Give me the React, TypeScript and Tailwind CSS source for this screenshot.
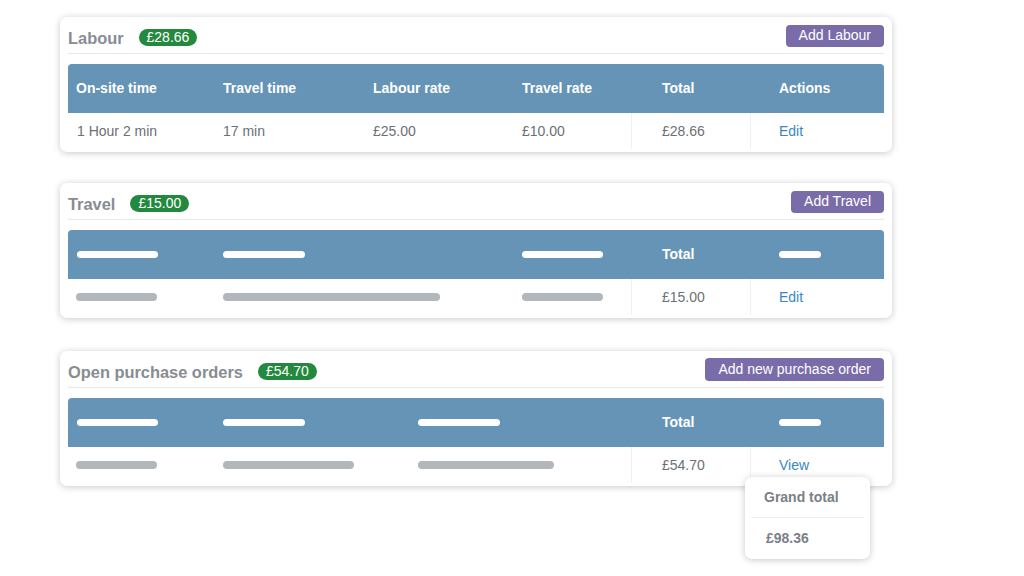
import React from "react";

const font = { fontFamily: '"Liberation Sans", Arial, sans-serif' };

function Badge({ v }: { v: string }) {
  return (
    <span className="ml-[15px] inline-flex h-[17px] items-center rounded-full bg-[#23893e] px-[8px] text-[14px] leading-[17px] text-white">
      {v}
    </span>
  );
}

function HBar({ w }: { w: string }) {
  return <div className={`h-[7px] rounded-full bg-white ${w}`} />;
}
function BBar({ w }: { w: string }) {
  return <div className={`h-[8px] rounded-full bg-[#b2b7bc] ${w}`} />;
}

function Card({
  title,
  badge,
  button,
  btnClass,
  className,
  children,
}: {
  title: string;
  badge: string;
  button: string;
  btnClass: string;
  className?: string;
  children: React.ReactNode;
}) {
  return (
    <div className={`w-[832px] rounded-[7px] bg-white px-[8px] pb-[3px] shadow-[0_1px_7px_rgba(0,0,0,0.22)] ${className ?? ""}`}>
      <div className="flex h-[37px] items-center justify-between border-b border-[#e6e8ea] pt-[6px]">
        <div className="flex items-center">
          <span className="text-[16.4px] font-bold text-[#878d94]">{title}</span>
          <Badge v={badge} />
        </div>
        <button
          className={`flex items-center rounded-[4px] bg-[#7a6ca9] px-[13px] text-[14px] text-white ${btnClass}`}
        >
          {button}
        </button>
      </div>
      <div className="mt-[10px]">{children}</div>
    </div>
  );
}

function Head({ children }: { children: React.ReactNode }) {
  return (
    <div className="flex h-[49px] items-center rounded-t-[4px] bg-[#6594b7] text-[14px] font-bold text-white">
      {children}
    </div>
  );
}
function Row({ children }: { children: React.ReactNode }) {
  return <div className="flex h-[36px] items-center text-[14px] text-[#6c7075]">{children}</div>;
}

export default function App() {
  return (
    <div style={font} className="relative min-h-[576px] w-[1024px] bg-white pl-[60px] pt-[17px]">
      <div className="flex flex-col">
        <Card title="Labour" badge="£28.66" button="Add Labour" btnClass="h-[22px] mt-[-5px]" className="mb-[31px]">
          <Head>
            <div className="w-[147px] pl-[8px]">On-site time</div>
            <div className="w-[150px] pl-[8px]">Travel time</div>
            <div className="w-[149px] pl-[8px]">Labour rate</div>
            <div className="w-[117px] pl-[8px]">Travel rate</div>
            <div className="w-[119px] pl-[31px]">Total</div>
            <div className="w-[134px] pl-[29px]">Actions</div>
          </Head>
          <Row>
            <div className="w-[147px] pl-[9px]">1 Hour 2 min</div>
            <div className="w-[150px] pl-[8px]">17 min</div>
            <div className="w-[149px] pl-[8px]">£25.00</div>
            <div className="w-[117px] pl-[8px]">£10.00</div>
            <div className="flex h-full w-[119px] items-center border-l border-[#eef0f1] pl-[30px]">£28.66</div>
            <div className="flex h-full w-[134px] items-center border-l border-[#eef0f1] pl-[28px] text-[#3b87c6]">Edit</div>
          </Row>
        </Card>

        <Card title="Travel" badge="£15.00" button="Add Travel" btnClass="h-[22px] mt-[-5px]" className="mb-[33px]">
          <Head>
            <div className="w-[147px] pl-[9px]"><HBar w="w-[81px]" /></div>
            <div className="w-[299px] pl-[8px]"><HBar w="w-[82px]" /></div>
            <div className="w-[117px] pl-[8px]"><HBar w="w-[81px]" /></div>
            <div className="w-[119px] pl-[31px]">Total</div>
            <div className="w-[134px] pl-[29px]"><HBar w="w-[42px]" /></div>
          </Head>
          <Row>
            <div className="w-[147px] pl-[8px]"><BBar w="w-[81px]" /></div>
            <div className="w-[299px] pl-[8px]"><BBar w="w-[217px]" /></div>
            <div className="w-[117px] pl-[8px]"><BBar w="w-[81px]" /></div>
            <div className="flex h-full w-[119px] items-center border-l border-[#eef0f1] pl-[30px]">£15.00</div>
            <div className="flex h-full w-[134px] items-center border-l border-[#eef0f1] pl-[28px] text-[#3b87c6]">Edit</div>
          </Row>
        </Card>

        <Card
          title="Open purchase orders"
          badge="£54.70"
          button="Add new purchase order"
          btnClass="h-[23px] mt-[-6px]"
        >
          <Head>
            <div className="w-[147px] pl-[9px]"><HBar w="w-[81px]" /></div>
            <div className="w-[195px] pl-[8px]"><HBar w="w-[82px]" /></div>
            <div className="w-[221px] pl-[8px]"><HBar w="w-[82px]" /></div>
            <div className="w-[119px] pl-[31px]">Total</div>
            <div className="w-[134px] pl-[29px]"><HBar w="w-[42px]" /></div>
          </Head>
          <Row>
            <div className="w-[147px] pl-[8px]"><BBar w="w-[81px]" /></div>
            <div className="w-[195px] pl-[8px]"><BBar w="w-[131px]" /></div>
            <div className="w-[221px] pl-[8px]"><BBar w="w-[136px]" /></div>
            <div className="flex h-full w-[119px] items-center border-l border-[#eef0f1] pl-[30px]">£54.70</div>
            <div className="flex h-full w-[134px] items-center border-l border-[#eef0f1] pl-[28px] text-[#3b87c6]">View</div>
          </Row>
        </Card>
      </div>

      <div className="absolute left-[745px] top-[477px] w-[125px] rounded-[7px] bg-white px-[6px] shadow-[0_1px_7px_rgba(0,0,0,0.22)]">
        <div className="flex h-[41px] items-center border-b border-[#eceef0] pl-[13px] pt-[1px] text-[14px] font-bold text-[#7b8087]">
          Grand total
        </div>
        <div className="flex h-[41px] items-center pl-[15px] text-[14px] font-bold text-[#7b8087]">£98.36</div>
      </div>
    </div>
  );
}
